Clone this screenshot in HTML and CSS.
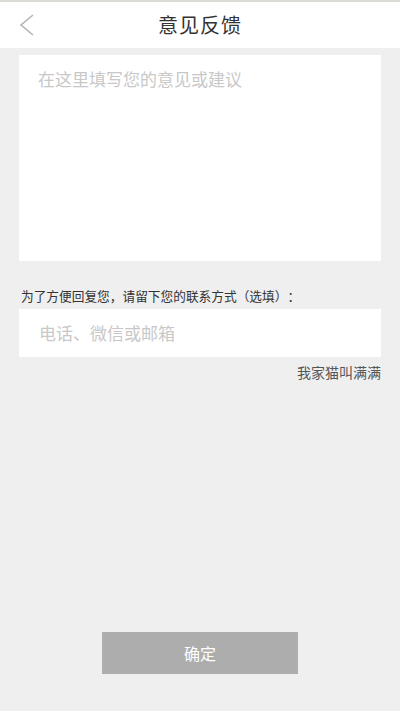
FILE: index.html
```html
<!DOCTYPE html>
<html lang="zh">
<head>
<meta charset="utf-8">
<link rel="stylesheet" href="styles.css">
</head>
<body>
<div class="page">
  <header class="topbar">
    <span class="back">
      <svg width="16" height="22" viewBox="0 0 16 22"><path d="M14 1 L2 11 L14 21" fill="none" stroke="#b4b4b4" stroke-width="1.6"/></svg>
    </span>
    <h1 class="title">意见反馈</h1>
  </header>
  <main class="content">
    <div class="card textarea"><span class="ph ph-area">在这里填写您的意见或建议</span></div>
    <p class="label">为了方便回复您，请留下您的联系方式（选填）：</p>
    <div class="card input"><span class="ph">电话、微信或邮箱</span></div>
    <p class="user">我家猫叫满满</p>
    <div class="spacer"></div>
    <div class="btn-row"><button class="btn">确定</button></div>
  </main>
</div>
</body>
</html>
```
FILE: styles.css
```css
* { box-sizing: border-box; }
html, body { margin: 0; padding: 0; }
body {
  font-family: "Noto Sans CJK SC", "Noto Sans", sans-serif;
  background: #efefef;
  text-spacing-trim: space-all;
}
.page {
  width: 400px;
  height: 711px;
  display: flex;
  flex-direction: column;
  border-top: 2px solid #dcdcd6;
}
.topbar {
  height: 46px;
  background: #fff;
  position: relative;
  display: flex;
  align-items: center;
  justify-content: center;
}
.back {
  position: absolute;
  left: 19px;
  top: 12px;
  width: 16px;
  height: 22px;
}
.back svg { display: block; }
.title {
  margin: 0;
  font-size: 20px;
  font-weight: normal;
  color: #333;
  line-height: 1;
  letter-spacing: 1px;
}
.content {
  flex: 1;
  display: flex;
  flex-direction: column;
  padding: 7px 19px 37px;
}
.card { background: #fff; }
.textarea {
  height: 206px;
  padding: 12px 19px;
}
.ph {
  color: #c8c8c8;
  font-size: 17px;
  line-height: 24px;
}
.label {
  margin: 26px 0 0 2px;
  font-size: 12.7px;
  line-height: 18px;
  color: #333;
}
.input {
  margin-top: 4px;
  height: 48px;
  padding: 0 20px;
  display: flex;
  align-items: center;
}
.user {
  margin: 5px 0 0;
  text-align: right;
  font-size: 14px;
  line-height: 20px;
  color: #555;
}
.spacer { flex: 1; }
.btn-row { display: flex; justify-content: center; }
.btn {
  width: 196px;
  height: 42px;
  border: none;
  background: #adadad;
  color: #fff;
  font-family: inherit;
  font-size: 16px;
  padding: 0;
}
```
